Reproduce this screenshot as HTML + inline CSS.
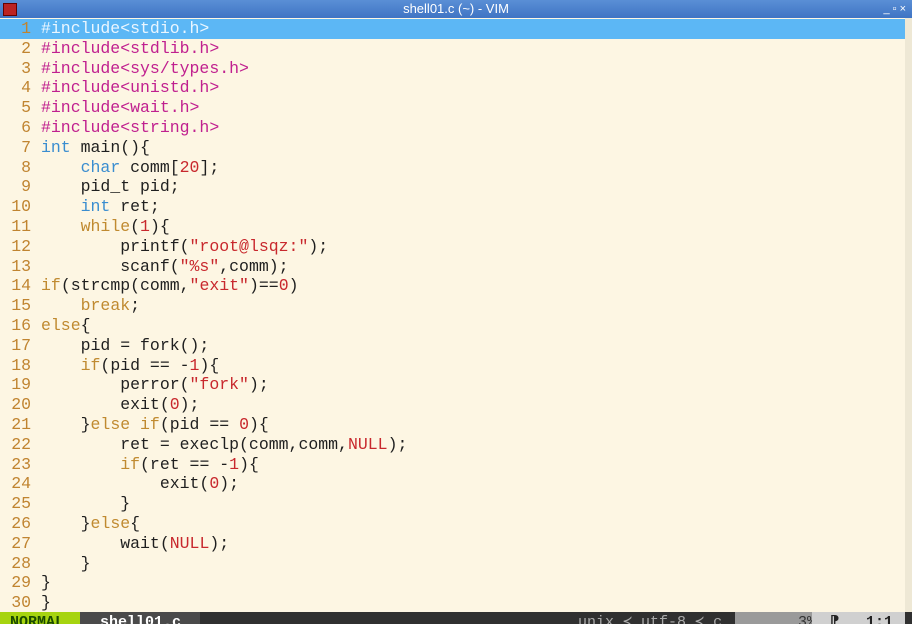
<!DOCTYPE html>
<html><head><meta charset="utf-8"><style>
body{margin:0;width:912px;height:624px;overflow:hidden;background:#fdf6e3;font-family:"Liberation Mono",monospace;position:relative}
#tb{position:absolute;left:0;top:0;width:912px;height:18px;background:linear-gradient(#5a8fd6,#3f74c4);color:#fff;font:13px "Liberation Sans",sans-serif;text-align:center;line-height:18px}
#ic{position:absolute;left:3px;top:3px;width:12px;height:11px;background:#b22;border:1px solid #600}
#ed{position:absolute;left:0;top:19px;width:905px}
#rs{position:absolute;left:905px;top:18px;width:7px;height:594px;background:#eee8d5}
.l{height:19.8px;line-height:19.8px;font-size:16.5px;white-space:pre;color:#1f1f1f}
.n{display:inline-block;width:31px;text-align:right;color:#c08430;margin-right:10px}
.hl{background:#5cb7f5;color:#eaf6ff}
.p{color:#c0208f}.k{color:#3a8dd0}.c{color:#c08a30}.r{color:#c8282d}
#sb{position:absolute;left:0;top:612px;width:912px;height:12px;background:#303030;font-size:15px;line-height:22px;color:#ccc;white-space:pre;overflow:hidden}
</style></head><body>
<div id="tb"><div id="ic"></div>shell01.c (~) - VIM<span style="position:absolute;right:6px;top:0;font-size:11px">_ ▫ ×</span></div>
<div id="rs"></div>
<div id="ed">
<div class="l hl"><span class="n">1</span>#include&lt;stdio.h&gt;</div>
<div class="l"><span class="n">2</span><span class="p">#include</span><span class="p">&lt;stdlib.h&gt;</span></div>
<div class="l"><span class="n">3</span><span class="p">#include&lt;sys/types.h&gt;</span></div>
<div class="l"><span class="n">4</span><span class="p">#include&lt;unistd.h&gt;</span></div>
<div class="l"><span class="n">5</span><span class="p">#include&lt;wait.h&gt;</span></div>
<div class="l"><span class="n">6</span><span class="p">#include&lt;string.h&gt;</span></div>
<div class="l"><span class="n">7</span><span class="k">int</span> main(){</div>
<div class="l"><span class="n">8</span>    <span class="k">char</span> comm[<span class="r">20</span>];</div>
<div class="l"><span class="n">9</span>    pid_t pid;</div>
<div class="l"><span class="n">10</span>    <span class="k">int</span> ret;</div>
<div class="l"><span class="n">11</span>    <span class="c">while</span>(<span class="r">1</span>){</div>
<div class="l"><span class="n">12</span>        printf(<span class="r">"root@lsqz:"</span>);</div>
<div class="l"><span class="n">13</span>        scanf(<span class="r">"%s"</span>,comm);</div>
<div class="l"><span class="n">14</span><span class="c">if</span>(strcmp(comm,<span class="r">"exit"</span>)==<span class="r">0</span>)</div>
<div class="l"><span class="n">15</span>    <span class="c">break</span>;</div>
<div class="l"><span class="n">16</span><span class="c">else</span>{</div>
<div class="l"><span class="n">17</span>    pid = fork();</div>
<div class="l"><span class="n">18</span>    <span class="c">if</span>(pid == -<span class="r">1</span>){</div>
<div class="l"><span class="n">19</span>        perror(<span class="r">"fork"</span>);</div>
<div class="l"><span class="n">20</span>        exit(<span class="r">0</span>);</div>
<div class="l"><span class="n">21</span>    }<span class="c">else</span> <span class="c">if</span>(pid == <span class="r">0</span>){</div>
<div class="l"><span class="n">22</span>        ret = execlp(comm,comm,<span class="r">NULL</span>);</div>
<div class="l"><span class="n">23</span>        <span class="c">if</span>(ret == -<span class="r">1</span>){</div>
<div class="l"><span class="n">24</span>            exit(<span class="r">0</span>);</div>
<div class="l"><span class="n">25</span>        }</div>
<div class="l"><span class="n">26</span>    }<span class="c">else</span>{</div>
<div class="l"><span class="n">27</span>        wait(<span class="r">NULL</span>);</div>
<div class="l"><span class="n">28</span>    }</div>
<div class="l"><span class="n">29</span>}</div>
<div class="l"><span class="n">30</span>}</div>
</div>
<div id="sb"><span style="position:absolute;left:0;width:80px;height:12px;background:#a6d40f;color:#1a4a00;font-weight:bold;padding-left:10px;box-sizing:border-box">NORMAL</span><span style="position:absolute;left:80px;width:120px;height:12px;background:#4a4a4a;color:#fff;font-weight:bold;padding-left:20px;box-sizing:border-box">shell01.c</span><span style="position:absolute;left:578px;color:#aaa">unix ≺ utf-8 ≺ c</span><span style="position:absolute;left:735px;width:112px;height:12px;background:#9a9a9a;color:#333">       3% </span><span style="position:absolute;left:812px;width:93px;height:12px;background:#d0d0d0;color:#222;font-weight:bold">  ⁋   1:1</span></div>
</body></html>
